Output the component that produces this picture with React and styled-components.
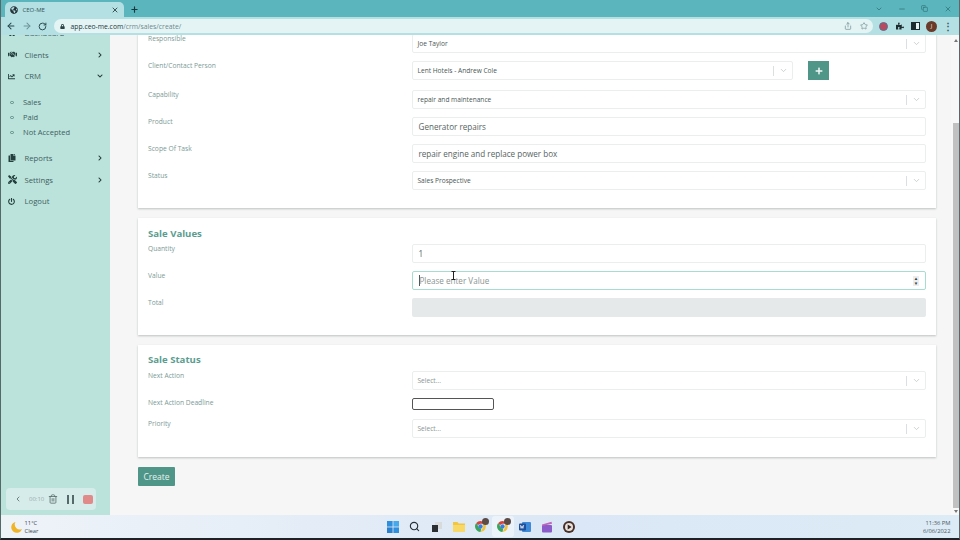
// App.jsx
import styled, { createGlobalStyle } from "styled-components";
import {
  FaHandshake,
  FaChartLine,
  FaCopy,
  FaTools,
  FaPowerOff,
  FaChevronRight,
  FaChevronDown,
  FaPlus,
  FaPuzzlePiece,
  FaLock,
  FaGlobeAmericas,
  FaHome,
} from "react-icons/fa";
import {
  ArrowLeft,
  ArrowRight,
  RotateCw,
  Share,
  Star,
  X,
  Plus,
  ChevronDown,
  Minus,
  Copy,
  ChevronLeft,
  Trash2,
  Search,
} from "lucide-react";

const GlobalStyle = createGlobalStyle`
  html, body {
    margin: 0;
    padding: 0;
    width: 960px;
    height: 540px;
    overflow: hidden;
    background: #111;
    font-family: "Open Sans", "Liberation Sans", sans-serif;
  }
  * { box-sizing: border-box; }
`;

const Screen = styled.div`
  position: relative;
  width: 960px;
  height: 540px;
  display: flex;
  flex-direction: column;
  border-bottom: 2px solid #1c2226;
  border-left: 1.5px solid #55686a;
  border-right: 1.5px solid #55686a;
`;

const TabBar = styled.div`
  height: 17px;
  background: #5bb5bc;
  display: flex;
  align-items: flex-end;
  padding-left: 3.5px;
  flex-shrink: 0;
  color: #17393d;
`;

const Tab = styled.div`
  width: 119px;
  height: 15px;
  background: #b4e0e4;
  border-radius: 5px 5px 0 0;
  display: flex;
  align-items: center;
  padding: 0 5px 0 5px;
  gap: 5px;
  font-size: 6px;
  color: #33565a;
`;

const TabTitle = styled.span`
  flex: 1;
`;

const NewTab = styled.div`
  width: 22px;
  height: 15px;
  display: flex;
  align-items: center;
  justify-content: center;
`;

const WindowButtons = styled.div`
  margin-left: auto;
  height: 17px;
  display: flex;
  align-items: center;
  color: #2b6a70;
`;

const WindowButton = styled.div`
  width: 23px;
  display: flex;
  justify-content: center;
`;

const Toolbar = styled.div`
  height: 18px;
  background: #b4e0e4;
  display: flex;
  align-items: center;
  flex-shrink: 0;
  padding-left: 1.5px;
  color: #24474b;
`;

const ToolButton = styled.div`
  width: 16px;
  display: flex;
  justify-content: center;
  align-items: center;
  opacity: ${(p) => (p.$dim ? 0.5 : 1)};
`;

const AddressBar = styled.div`
  width: 819px;
  height: 14px;
  margin: 0 3px;
  border-radius: 7px;
  background: #e4f4f5;
  display: flex;
  align-items: center;
  padding: 0 1px 0 6px;
  font-size: 6.8px;
  color: #6d8a8d;
`;

const Host = styled.span`
  color: #20393c;
  margin-left: 6px;
`;

const AddressTools = styled.div`
  margin-left: auto;
  display: flex;
  align-items: center;
`;

const Avatar = styled.div`
  width: 11px;
  height: 11px;
  border-radius: 50%;
  background: #6a3b2b;
  color: #f3e5da;
  font-size: 6px;
  line-height: 11px;
  text-align: center;
`;

const RecordDot = styled.div`
  width: 9px;
  height: 9px;
  border-radius: 50%;
  background: #b9495f;
  border: 1.5px solid #5b6f8a;
`;

const PanelIcon = styled.div`
  width: 9px;
  height: 8px;
  border: 1.5px solid #1d2c2e;
  border-left-width: 5px;
  background: #e7f4f5;
`;

const Dots = styled.div`
  font-size: 10px;
  line-height: 10px;
  font-weight: 700;
  color: #3a5a5e;
`;

const Page = styled.div`
  flex: 1;
  min-height: 0;
  display: flex;
  background: #f6f6f6;
  overflow: hidden;
`;

const Sidebar = styled.nav`
  width: 108.5px;
  flex-shrink: 0;
  background: #bbe3dc;
  overflow: hidden;
`;

const NavList = styled.div`
  margin-top: -12.5px;
`;

const NavItem = styled.div`
  height: 21.5px;
  display: flex;
  align-items: center;
  padding-left: 6.5px;
  font-size: 7.7px;
  color: #3e5e5c;
`;

const NavIcon = styled.span`
  width: 17px;
  display: flex;
  align-items: center;
  color: #24403e;
`;

const NavChevron = styled.span`
  margin-left: auto;
  margin-right: 7px;
  display: flex;
  color: #223c3a;
`;

const SubList = styled.div`
  padding: 7.75px 0;
`;

const SubItem = styled.div`
  height: 15px;
  display: flex;
  align-items: center;
  padding-left: 9px;
  gap: 9.5px;
  font-size: 7.5px;
  color: #3e5e5c;
`;

const Bullet = styled.span`
  width: 3.5px;
  height: 3.5px;
  border-radius: 50%;
  border: 1px solid #5c8d86;
`;

const Main = styled.main`
  flex: 1;
  min-width: 0;
  padding: 0 14.5px 0 28.5px;
  overflow: hidden;
`;

const Card = styled.section`
  background: #fff;
  padding: 7px 10px 10px;
  margin-bottom: 10px;
  box-shadow: 0 1px 2px rgba(60, 70, 70, 0.3);
`;

const TopCard = styled(Card)`
  margin-top: -1px;
  padding: 0 10px 10px;
`;

const Heading = styled.h2`
  margin: ${(p) => (p.$tight ? "1px 0 3px" : "0 0 4px")};
  font-size: 9.6px;
  line-height: 15px;
  font-weight: 700;
  color: #5a9d90;
`;

const Row = styled.div`
  display: grid;
  grid-template-columns: 263.5px 1fr;
  margin-bottom: ${(p) => p.$after ?? 8}px;
`;

const Label = styled.label`
  padding-top: 1px;
  font-size: 6.7px;
  line-height: 8px;
  color: #7c9a96;
`;

const ControlLine = styled.div`
  display: flex;
  align-items: flex-start;
  gap: 15px;
`;

const Select = styled.div`
  flex: 1;
  height: 19px;
  border: 1px solid #eceeee;
  border-radius: 2px;
  background: #fff;
  display: flex;
  align-items: center;
  padding-left: 5px;
  font-size: 6.6px;
  color: ${(p) => (p.$empty ? "#8a9694" : "#4a5755")};
`;

const SelectText = styled.span`
  flex: 1;
`;

const SelectArrow = styled.span`
  width: 19px;
  height: 10px;
  border-left: 1px solid #dcdfdf;
  display: flex;
  align-items: center;
  justify-content: center;
  color: #bcc3c2;
`;

const TextInput = styled.div`
  height: 19px;
  border: 1px solid #eceeee;
  border-radius: 2px;
  background: #fff;
  display: flex;
  align-items: center;
  padding-left: 6px;
  font-size: 8.1px;
  color: #566462;
`;

const FocusInput = styled(TextInput)`
  border-color: #a9dcd0;
  color: #8a9492;
  padding-right: 6px;
  justify-content: space-between;
`;

const Caret = styled.span`
  border-left: 1px solid #4b5a58;
`;

const Spinner = styled.span`
  width: 6px;
  height: 10px;
  background: #eceeee;
  color: #33403e;
  font-size: 4.5px;
  line-height: 5px;
  text-align: center;
`;

const ReadOnlyInput = styled.div`
  height: 19px;
  border-radius: 2px;
  background: #e6e9e9;
`;

const DateInput = styled.div`
  width: 82px;
  height: 12px;
  background: #fff;
  border: 1px solid #555;
  border-radius: 2px;
`;

const AddButton = styled.button`
  width: 21px;
  height: 19px;
  margin-right: 97px;
  border: none;
  padding: 0;
  background: #4f9688;
  color: #eef7f5;
  display: flex;
  align-items: center;
  justify-content: center;
`;

const SubmitButton = styled.button`
  display: block;
  width: 37px;
  height: 19px;
  padding: 0;
  border: none;
  border-radius: 1px;
  background: #4f9688;
  color: #e6f3f0;
  font-family: inherit;
  font-size: 8.5px;
`;

const TextCursor = styled.svg`
  position: absolute;
  left: 450px;
  top: 271px;
`;

const Scrollbar = styled.div`
  width: 8.5px;
  flex-shrink: 0;
  background: #f8f8f8;
  display: flex;
  flex-direction: column;
  align-items: center;
  padding: 4px 0 2px 2px;
`;

const ScrollArrow = styled.div`
  width: 0;
  height: 0;
  border-left: 2.5px solid transparent;
  border-right: 2.5px solid transparent;
  ${(p) => (p.$down ? "border-top: 3px solid #777;" : "border-bottom: 3px solid #777;")}
`;

const ScrollTrack = styled.div`
  flex: 1;
  width: 100%;
  padding-top: 81px;
  padding-bottom: 2px;
  display: flex;
`;

const ScrollThumb = styled.div`
  flex: 1;
  background: #c1c1c1;
`;

const Recorder = styled.div`
  position: absolute;
  left: 5px;
  top: 488px;
  width: 90px;
  height: 22px;
  border-radius: 4px;
  background: #d6ecea;
  display: flex;
  align-items: center;
  padding-left: 8px;
  color: #5c6f6e;
  font-size: 6px;
`;

const RecorderTime = styled.span`
  color: #9aacaa;
  margin-left: 7px;
`;

const RecorderTrash = styled.span`
  display: flex;
  margin-left: 4px;
`;

const PauseBars = styled.span`
  width: 7px;
  height: 9px;
  margin-left: 9px;
  border-left: 2px solid #55686a;
  border-right: 2px solid #55686a;
`;

const StopSquare = styled.span`
  width: 10px;
  height: 9px;
  margin-left: 9px;
  border-radius: 2px;
  background: #e08a8a;
`;

const Taskbar = styled.footer`
  height: 23px;
  flex-shrink: 0;
  background: linear-gradient(90deg, #eef3f8 0%, #dbe7f6 60%, #dcebf6 100%);
  display: grid;
  grid-template-columns: 1fr auto 1fr;
  align-items: center;
  padding: 0 8.5px 0 9.5px;
`;

const Weather = styled.div`
  display: flex;
  align-items: center;
  gap: 2px;
  font-size: 5.8px;
  line-height: 8px;
  color: #3a4750;
`;

const TaskIcons = styled.div`
  display: flex;
`;

const TaskIcon = styled.div`
  position: relative;
  width: 22px;
  height: 21px;
  display: flex;
  align-items: center;
  justify-content: center;
  background: ${(p) => (p.$active ? "rgba(255,255,255,0.45)" : "transparent")};
  border-radius: 3px;
  color: #26323a;
`;

const Clock = styled.div`
  justify-self: end;
  text-align: right;
  font-size: 5.8px;
  line-height: 8px;
  color: #4b5962;
`;

function SelectField({ label, value, placeholder, after }) {
  return (
    <Row $after={after}>
      <Label>{label}</Label>
      <Select $empty={!value}>
        <SelectText>{value || placeholder}</SelectText>
        <SelectArrow>
          <ChevronDown size={9} />
        </SelectArrow>
      </Select>
    </Row>
  );
}

function TextField({ label, value }) {
  return (
    <Row>
      <Label>{label}</Label>
      <TextInput>{value}</TextInput>
    </Row>
  );
}

function Chrome() {
  return (
    <svg width="13" height="13" viewBox="0 0 24 24">
      <path d="M12 2a10 10 0 0 1 8.7 5H12a5 5 0 0 0-4.6 3L4.2 5.7A10 10 0 0 1 12 2z" fill="#d9443a" />
      <path d="M20.7 7A10 10 0 0 1 12 22l4.3-7.5A5 5 0 0 0 16.3 9z" fill="#f3c233" />
      <path d="M12 22A10 10 0 0 1 4.2 5.7L8.5 13a5 5 0 0 0 5 2.8z" fill="#3ba55c" />
      <circle cx="12" cy="12" r="4" fill="#3a7fe0" />
    </svg>
  );
}

function Badge() {
  return (
    <svg width="7" height="7" viewBox="0 0 10 10" style={{ position: "absolute", top: 2, right: 3 }}>
      <circle cx="5" cy="5" r="5" fill="#5a4b46" />
    </svg>
  );
}

const NAV_AFTER = [
  { icon: <FaCopy size={8} />, text: "Reports", chevron: true },
  { icon: <FaTools size={9} />, text: "Settings", chevron: true },
  { icon: <FaPowerOff size={7} />, text: "Logout" },
];

export default function App() {
  return (
    <>
      <GlobalStyle />
      <Screen>
        <TabBar>
          <Tab>
            <FaGlobeAmericas size={8} color="#26343a" />
            <TabTitle>CEO-ME</TabTitle>
            <X size={8} strokeWidth={2.5} color="#24393c" />
          </Tab>
          <NewTab>
            <Plus size={9} strokeWidth={3} />
          </NewTab>
          <WindowButtons>
            <WindowButton>
              <ChevronDown size={8} />
            </WindowButton>
            <WindowButton>
              <Minus size={8} />
            </WindowButton>
            <WindowButton>
              <Copy size={7} />
            </WindowButton>
            <WindowButton>
              <X size={8} />
            </WindowButton>
          </WindowButtons>
        </TabBar>

        <Toolbar>
          <ToolButton>
            <ArrowLeft size={10} strokeWidth={2.5} />
          </ToolButton>
          <ToolButton $dim>
            <ArrowRight size={10} strokeWidth={2.5} />
          </ToolButton>
          <ToolButton>
            <RotateCw size={9} strokeWidth={2.5} />
          </ToolButton>
          <AddressBar>
            <FaLock size={5} color="#2d4245" />
            <Host>app.ceo-me.com</Host>/crm/sales/create/
            <AddressTools>
              <ToolButton>
                <Share size={8} />
              </ToolButton>
              <ToolButton>
                <Star size={8} />
              </ToolButton>
            </AddressTools>
          </AddressBar>
          <ToolButton>
            <RecordDot />
          </ToolButton>
          <ToolButton>
            <FaPuzzlePiece size={8} color="#1d2c2e" />
          </ToolButton>
          <ToolButton>
            <PanelIcon />
          </ToolButton>
          <ToolButton>
            <Avatar>J</Avatar>
          </ToolButton>
          <ToolButton>
            <Dots>⋮</Dots>
          </ToolButton>
        </Toolbar>

        <Page>
          <Sidebar>
            <NavList>
              <NavItem>
                <NavIcon>
                  <FaHome size={8} />
                </NavIcon>
                Dashboard
              </NavItem>
              <NavItem>
                <NavIcon>
                  <FaHandshake size={9} />
                </NavIcon>
                Clients
                <NavChevron>
                  <FaChevronRight size={6} />
                </NavChevron>
              </NavItem>
              <NavItem>
                <NavIcon>
                  <FaChartLine size={7} />
                </NavIcon>
                CRM
                <NavChevron>
                  <FaChevronDown size={6} />
                </NavChevron>
              </NavItem>
              <SubList>
                {["Sales", "Paid", "Not Accepted"].map((name) => (
                  <SubItem key={name}>
                    <Bullet />
                    {name}
                  </SubItem>
                ))}
              </SubList>
              {NAV_AFTER.map((item) => (
                <NavItem key={item.text}>
                  <NavIcon>{item.icon}</NavIcon>
                  {item.text}
                  {item.chevron && (
                    <NavChevron>
                      <FaChevronRight size={6} />
                    </NavChevron>
                  )}
                </NavItem>
              ))}
            </NavList>
          </Sidebar>

          <Main>
            <TopCard>
              <SelectField label="Responsible" value="Joe Taylor" />
              <Row $after={10}>
                <Label>Client/Contact Person</Label>
                <ControlLine>
                  <Select>
                    <SelectText>Lent Hotels - Andrew Cole</SelectText>
                    <SelectArrow>
                      <ChevronDown size={9} />
                    </SelectArrow>
                  </Select>
                  <AddButton>
                    <FaPlus size={8} />
                  </AddButton>
                </ControlLine>
              </Row>
              <SelectField label="Capability" value="repair and maintenance" />
              <TextField label="Product" value="Generator repairs" />
              <TextField label="Scope Of Task" value="repair engine and replace power box" />
              <SelectField label="Status" value="Sales Prospective" />
            </TopCard>

            <Card>
              <Heading $tight>Sale Values</Heading>
              <TextField label="Quantity" value="1" />
              <Row>
                <Label>Value</Label>
                <FocusInput>
                  <Caret>Please enter Value</Caret>
                  <Spinner>
                    ▲
                    <br />▼
                  </Spinner>
                </FocusInput>
              </Row>
              <Row>
                <Label>Total</Label>
                <ReadOnlyInput />
              </Row>
            </Card>

            <Card>
              <Heading>Sale Status</Heading>
              <SelectField label="Next Action" placeholder="Select..." />
              <Row $after={9}>
                <Label>Next Action Deadline</Label>
                <DateInput />
              </Row>
              <SelectField label="Priority" placeholder="Select..." after={9} />
            </Card>

            <SubmitButton>Create</SubmitButton>
          </Main>

          <Scrollbar>
            <ScrollArrow />
            <ScrollTrack>
              <ScrollThumb />
            </ScrollTrack>
            <ScrollArrow $down />
          </Scrollbar>
        </Page>

        <Taskbar>
          <Weather>
            <svg width="12" height="12" viewBox="0 0 24 24">
              <path d="M9 2a11 11 0 1 0 13 14A10 10 0 0 1 9 2z" fill="#f0b429" />
            </svg>
            <div>
              11°C
              <br />
              Clear
            </div>
          </Weather>
          <TaskIcons>
            <TaskIcon>
              <svg width="12" height="12" viewBox="0 0 12 12">
                <rect x="0" y="0" width="5.6" height="5.6" fill="#2f8fdc" />
                <rect x="6.4" y="0" width="5.6" height="5.6" fill="#45a9ea" />
                <rect x="0" y="6.4" width="5.6" height="5.6" fill="#2a80cc" />
                <rect x="6.4" y="6.4" width="5.6" height="5.6" fill="#2f8fdc" />
              </svg>
            </TaskIcon>
            <TaskIcon>
              <Search size={11} strokeWidth={2.5} />
            </TaskIcon>
            <TaskIcon>
              <svg width="10" height="10" viewBox="0 0 10 10">
                <rect x="3" y="0" width="7" height="7" fill="#d8dadc" />
                <rect x="0" y="3" width="6" height="7" fill="#2b2f33" />
              </svg>
            </TaskIcon>
            <TaskIcon>
              <svg width="12" height="11" viewBox="0 0 12 11">
                <path d="M0 1h4.5l1.2 1.4H12V11H0z" fill="#f3c63f" />
                <rect x="0" y="4" width="12" height="7" fill="#f8d867" />
              </svg>
            </TaskIcon>
            <TaskIcon>
              <Chrome />
              <Badge />
            </TaskIcon>
            <TaskIcon $active>
              <Chrome />
              <Badge />
            </TaskIcon>
            <TaskIcon>
              <svg width="12" height="12" viewBox="0 0 12 12">
                <rect x="3" y="1" width="9" height="10" rx="1" fill="#3f8ad8" />
                <rect x="0" y="2.5" width="7" height="7" rx="1" fill="#1d4f9c" />
                <path d="M1.3 4l.8 3.4.9-2.6.9 2.6.8-3.4" stroke="#fff" strokeWidth=".7" fill="none" />
              </svg>
            </TaskIcon>
            <TaskIcon>
              <svg width="12" height="12" viewBox="0 0 12 12">
                <rect x="1" y="4" width="10" height="7.5" rx="1" fill="#8a5bc9" />
                <path d="M1 3.5 10.5 .8l.5 2-10 2.3z" fill="#c066b8" />
              </svg>
            </TaskIcon>
            <TaskIcon>
              <svg width="12" height="12" viewBox="0 0 12 12">
                <circle cx="6" cy="6" r="6" fill="#4a3028" />
                <circle cx="6" cy="6" r="4" fill="#e9e2dc" />
                <path d="M4.7 3.6v4.8L8.6 6z" fill="#332420" />
              </svg>
            </TaskIcon>
          </TaskIcons>
          <Clock>
            11:36 PM
            <br />
            6/06/2022
          </Clock>
        </Taskbar>

        <Recorder>
          <ChevronLeft size={8} strokeWidth={2.5} />
          <RecorderTime>00:10</RecorderTime>
          <RecorderTrash>
            <Trash2 size={10} />
          </RecorderTrash>
          <PauseBars />
          <StopSquare />
        </Recorder>

        <TextCursor width="5" height="9" viewBox="0 0 5 9">
          <path d="M.5.5h4M2.5.5v8M.5 8.5h4" stroke="#222" strokeWidth="1" fill="none" />
        </TextCursor>
      </Screen>
    </>
  );
}
